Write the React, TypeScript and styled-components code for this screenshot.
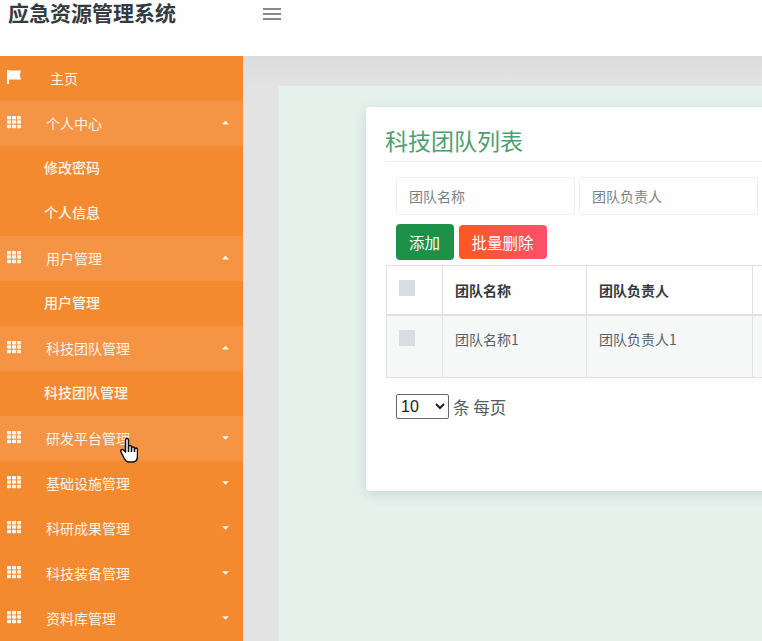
import React, { FunctionComponent } from "react";
import styled, { createGlobalStyle } from "styled-components";
import { FaCaretDown, FaCaretUp, FaTh } from "react-icons/fa";

const Global = createGlobalStyle`
  html, body {
    margin: 0;
    height: 100%;
    overflow: hidden;
    background: #fff;
    font-family: "Noto Sans CJK SC", "Liberation Sans", sans-serif;
  }
`;

const Page = styled.div`
  position: relative;
  width: 762px;
  height: 641px;
  overflow: hidden;
  display: flex;
  flex-direction: column;
`;

const Header = styled.header`
  height: 56px;
  flex: none;
  display: flex;
  align-items: flex-start;
  background: #fdfefd;
`;

const Brand = styled.div`
  width: 263px;
  padding-left: 8px;
  box-sizing: border-box;
  font-size: 21px;
  line-height: 24px;
  font-weight: 700;
  color: #343a40;
`;

const Burger = styled.div`
  width: 18px;
  margin-top: 8px;
  display: flex;
  flex-direction: column;
  gap: 3px;
  & span {
    height: 2px;
    background: #888;
  }
`;

const Body = styled.div`
  flex: 1;
  display: flex;
  min-height: 0;
`;

const Side = styled.nav`
  width: 243px;
  flex: none;
  background: #f48a30;
`;

const Item = styled.div<{ $on?: boolean }>`
  height: 45px;
  display: flex;
  align-items: center;
  padding: 0 12px 0 7px;
  box-sizing: border-box;
  background: ${(p) => (p.$on ? "#f69445" : "transparent")};
  color: #fdf3e6;
  font-size: 14px;
  & > svg:first-child {
    width: 14px;
    height: 14px;
    flex: none;
    margin-top: -3px;
  }
`;

const FlagIcon = styled.svg`
  fill: #fff;
`;

const ItemText = styled.span<{ $home?: boolean }>`
  flex: 1;
  margin-left: ${(p) => (p.$home ? "29px" : "25px")};
  margin-top: -1px;
`;

const Caret = styled.span`
  display: flex;
  font-size: 11px;
  margin-top: -2px;
`;

const SubItem = styled.div`
  height: 45px;
  display: flex;
  align-items: center;
  padding: 0 0 4px 44px;
  box-sizing: border-box;
  color: #fdf3e6;
  font-size: 14px;
  font-weight: 500;
`;

const Main = styled.main`
  flex: 1;
  min-width: 0;
  padding: 30px 0 0 36px;
  background: linear-gradient(#dcdcdc, #e3e3e3 30px);
`;

const Panel = styled.div`
  height: 100%;
  padding: 21px 0 0 87px;
  box-sizing: border-box;
  background: #e5f1ea;
`;

const Card = styled.section`
  width: 560px;
  height: 384px;
  padding: 16px 0 0 19px;
  box-sizing: border-box;
  background: #fdfefd;
  border-radius: 4px 0 0 4px;
  box-shadow: 0 3px 12px rgba(120, 140, 180, 0.25);
`;

const Title = styled.h2`
  margin: 0;
  height: 38px;
  font-size: 23px;
  line-height: 34px;
  font-weight: 400;
  color: #4d9e74;
  border-bottom: 1px solid #eceeec;
`;

const Filters = styled.div`
  display: flex;
  gap: 4px;
  margin: 15px 0 0 11px;
`;

const Field = styled.input`
  width: 179px;
  height: 38px;
  flex: none;
  padding: 0 12px;
  box-sizing: border-box;
  border: 1px solid #eef0ee;
  border-radius: 3px;
  background: #fdfefd;
  font: inherit;
  font-size: 14px;
  outline: none;
  &::placeholder {
    color: #7b8288;
  }
`;

const Actions = styled.div`
  display: flex;
  align-items: center;
  gap: 5px;
  margin: 9px 0 5px 11px;
`;

const Button = styled.button<{ $danger?: boolean }>`
  height: ${(p) => (p.$danger ? "34px" : "36px")};
  width: ${(p) => (p.$danger ? "88px" : "58px")};
  padding: 0 1px 0 0;
  border: 0;
  border-radius: 4px;
  font: inherit;
  font-size: 15.5px;
  color: #fff;
  background: ${(p) =>
    p.$danger ? "linear-gradient(90deg, #ff5722, #ff4f6e)" : "#1d9148"};
`;

const Table = styled.table`
  width: 520px;
  margin-left: 1px;
  border-collapse: collapse;
  table-layout: fixed;
  font-size: 14px;
  color: #5a6168;
  & th,
  & td {
    border: 1px solid #dee2e6;
    padding: 0 0 0 12px;
    text-align: left;
    box-sizing: border-box;
  }
  & th {
    height: 49px;
    font-weight: 700;
    color: #343a40;
    border-bottom-width: 2px;
  }
  & td {
    height: 63px;
    vertical-align: top;
    padding-top: 13px;
    background: #f6f7f7;
  }
`;

const Check = styled.div<{ $low?: boolean }>`
  width: 16px;
  height: 16px;
  background: #d8dde1;
  margin: ${(p) => (p.$low ? "0 0 4px" : "1px 0 5px")};
`;

const Pager = styled.div`
  display: flex;
  align-items: center;
  gap: 4px;
  margin: 16px 0 0 11px;
  font-size: 16.5px;
  color: #555c63;
`;

const PageSize = styled.select`
  width: 53px;
  height: 25px;
  font-family: "Liberation Sans", sans-serif;
  font-size: 16px;
  color: #222;
  background: #fff;
  border: 1px solid #666;
  border-radius: 2px;
`;

const Hand = styled.svg`
  position: absolute;
  left: 120px;
  top: 437px;
  width: 18px;
  height: 26px;
  fill: #fff;
  stroke: #111;
  stroke-width: 1.5;
  stroke-linejoin: round;
`;

type Entry = { label: string; on?: boolean; open?: boolean; subs?: string[] };

const entries: Entry[] = [
  { label: "个人中心", on: true, open: true, subs: ["修改密码", "个人信息"] },
  { label: "用户管理", on: true, open: true, subs: ["用户管理"] },
  { label: "科技团队管理", on: true, open: true, subs: ["科技团队管理"] },
  { label: "研发平台管理", on: true },
  { label: "基础设施管理" },
  { label: "科研成果管理" },
  { label: "科技装备管理" },
  { label: "资料库管理" },
];

const App: FunctionComponent = () => {
  return (
    <Page>
      <Global />
      <Header>
        <Brand>应急资源管理系统</Brand>
        <Burger>
          <span />
          <span />
          <span />
        </Burger>
      </Header>
      <Body>
        <Side>
          <Item>
            <FlagIcon viewBox="0 0 14 14">
              <path d="M0 0h2v14H0zM2 0.5h12l-1.2 4.5L14 9.5H2z" />
            </FlagIcon>
            <ItemText $home>主页</ItemText>
          </Item>
          {entries.map((e) => (
            <React.Fragment key={e.label}>
              <Item $on={e.on}>
                <FaTh />
                <ItemText>{e.label}</ItemText>
                <Caret>{e.open ? <FaCaretUp /> : <FaCaretDown />}</Caret>
              </Item>
              {e.subs?.map((s) => (
                <SubItem key={s}>{s}</SubItem>
              ))}
            </React.Fragment>
          ))}
        </Side>
        <Main>
          <Panel>
            <Card>
              <Title>科技团队列表</Title>
              <Filters>
                <Field placeholder="团队名称" />
                <Field placeholder="团队负责人" />
              </Filters>
              <Actions>
                <Button>添加</Button>
                <Button $danger>批量删除</Button>
              </Actions>
              <Table>
                <colgroup>
                  <col style={{ width: 56 }} />
                  <col style={{ width: 144 }} />
                  <col style={{ width: 166 }} />
                  <col />
                </colgroup>
                <thead>
                  <tr>
                    <th>
                      <Check $low />
                    </th>
                    <th>团队名称</th>
                    <th>团队负责人</th>
                    <th />
                  </tr>
                </thead>
                <tbody>
                  <tr>
                    <td>
                      <Check />
                    </td>
                    <td>团队名称1</td>
                    <td>团队负责人1</td>
                    <td />
                  </tr>
                </tbody>
              </Table>
              <Pager>
                <PageSize defaultValue="10">
                  <option>10</option>
                  <option>20</option>
                </PageSize>
                条 每页
              </Pager>
            </Card>
          </Panel>
        </Main>
      </Body>
      <Hand viewBox="0 0 18 26">
        <path d="M5.5 14V3a1.5 1.5 0 0 1 3 0v7a1.5 1.5 0 0 1 3 0v1.5a1.5 1.5 0 0 1 3 0v1a1.5 1.5 0 0 1 3 0V19c0 4-2 6-5 6H9c-3 0-4-2-5-4l-3-6c-1-2 1-3 2.5-2l2 2z" />
        <path d="M8.5 10v5M11.5 11.5V15M14.5 12.5V15" fill="none" />
      </Hand>
    </Page>
  );
};

export default App;
